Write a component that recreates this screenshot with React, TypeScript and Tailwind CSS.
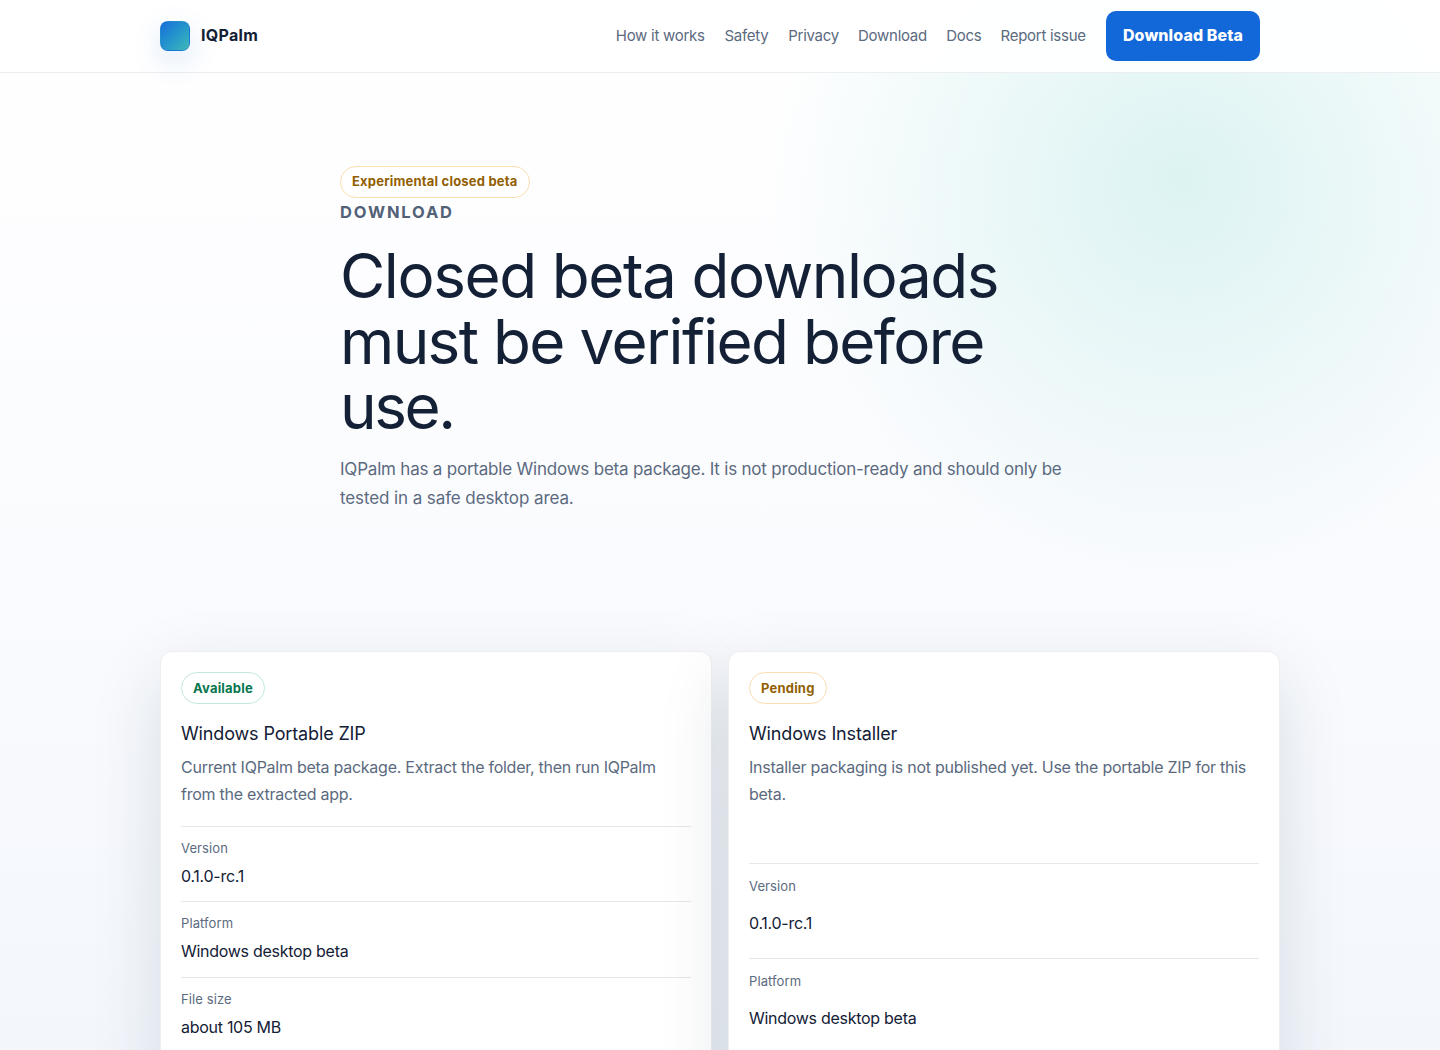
import React from 'react';
import clsx from 'clsx';

type Tone = 'success' | 'warning';

interface Detail {
  label: string;
  value: string;
}

interface DownloadCardProps {
  status: string;
  tone: Tone;
  title: string;
  description: string;
  details: Detail[];
  roomy?: boolean;
}

const navLinks = [
  { label: 'How it works', width: 'w-[89.3px]' },
  { label: 'Safety', width: 'w-[44.4px]' },
  { label: 'Privacy', width: 'w-[50.4px]' },
  { label: 'Download', width: 'w-[68.8px]' },
  { label: 'Docs', width: 'w-[34.9px]' },
  { label: 'Report issue', width: 'w-[85.5px]' },
];

const Badge: React.FC<{ tone: Tone; className?: string; children: React.ReactNode }> = ({ tone, className, children }) => (
  <span
    className={clsx(
      'inline-flex h-8 items-center whitespace-nowrap rounded-full border bg-white px-[11px] text-[13px] font-bold tracking-[0.2px]',
      tone === 'success' ? 'border-[#c5e8dc] text-[#08764f]' : 'border-[#fbdfb0] text-[#925f04]',
      className
    )}
  >
    {children}
  </span>
);

const Header: React.FC = () => (
  <header className="h-[73px] border-b border-[#162033]/8 bg-white/92">
    <div className="mx-auto flex h-[72px] w-[1120px] items-center justify-between pr-5">
      <a href="#" className="flex items-center gap-[11px]">
        <span className="size-[30px] rounded-lg border border-[#1268d8]/40 bg-linear-135 from-[#1c6ddb] to-[#3fb9b6] shadow-[0_10px_30px_rgba(18,104,216,0.16)]" />
        <span className="pb-0.5 text-base font-bold tracking-[0.3px] text-[#132036]">IQPalm</span>
      </a>
      <nav className="flex items-center">
        <div className="mr-5 flex gap-[19.4px]">
          {navLinks.map((link) => (
            <a key={link.label} href="#" className={clsx('whitespace-nowrap text-[15px] tracking-[-0.27px] text-[#5b6a7e]', link.width)}>
              {link.label}
            </a>
          ))}
        </div>
        <a
          href="#"
          className="flex h-[50px] w-[154px] items-center justify-center whitespace-nowrap rounded-[10px] bg-[#1268d8] pb-0.5 text-base font-extrabold tracking-[0.1px] text-white"
        >
          Download Beta
        </a>
      </nav>
    </div>
  </header>
);

const DownloadCard: React.FC<DownloadCardProps> = ({ status, tone, title, description, details, roomy }) => (
  <article className="h-[640px] rounded-xl border border-[#162033]/8 bg-white p-5 shadow-[0_24px_70px_rgba(18,38,58,0.13)]">
    <div className="flex">
      <Badge tone={tone} className="pt-0.5">{status}</Badge>
    </div>
    <h2 className="mt-[15px] text-lg leading-[30px] tracking-[-0.14px] text-[#132036]">{title}</h2>
    <p className="mt-[5px] text-base leading-[27px] tracking-[-0.26px] text-[#5b6a7e]">{description}</p>
    <dl className={roomy ? 'mt-[55px]' : 'mt-[18px]'}>
      {details.map((detail) => (
        <div
          key={detail.label}
          className={clsx('border-t border-[#162033]/10', roomy ? 'h-[94.7px] pt-[11px]' : 'h-[75.3px] pt-[10px]')}
        >
          <dt className="text-[13px] leading-[22px] tracking-[0.1px] text-[#5b6a7e]">{detail.label}</dt>
          <dd className={clsx('text-base leading-[27px] tracking-[-0.28px] text-[#132036]', roomy ? 'mt-[13px]' : 'mt-1')}>
            {detail.value}
          </dd>
        </div>
      ))}
    </dl>
  </article>
);

const details: Detail[] = [
  { label: 'Version', value: '0.1.0-rc.1' },
  { label: 'Platform', value: 'Windows desktop beta' },
  { label: 'File size', value: 'about 105 MB' },
];

export default function App() {
  return (
    <div className="h-[1050px] overflow-hidden bg-[radial-gradient(circle_at_1181px_176px,rgba(26,178,170,0.145),transparent_412px),linear-gradient(180deg,#ffffff_0%,#fafbfe_55%,#f3f7fc_100%)] font-['Inter','Liberation_Sans',sans-serif] text-[#132036]">
      <Header />
      <main>
        <section className="mx-auto h-[578px] w-[760px] pt-[93px]">
          <div className="flex">
            <Badge tone="warning">Experimental closed beta</Badge>
          </div>
          <p className="text-[16.5px] font-bold uppercase leading-[28px] tracking-[1.85px] text-[#526176]">Download</p>
          <h1 className="mt-[17px] text-[62px] leading-[65.7px]">
            <span className="block tracking-[-1.44px]">Closed beta downloads</span>
            <span className="block tracking-[-1.68px]">must be verified before</span>
            <span className="block tracking-[-2.4px]">use.</span>
          </h1>
          <p className="mt-[15px] text-[17px] leading-[29px] tracking-[-0.21px] text-[#5b6a7e]">
            IQPalm has a portable Windows beta package. It is not production-ready and should only be
            <br />
            <span className="tracking-[-0.1px]">tested in a safe desktop area.</span>
          </p>
        </section>
        <section className="mx-auto grid w-[1120px] grid-cols-2 gap-4">
          <DownloadCard
            status="Available"
            tone="success"
            title="Windows Portable ZIP"
            description="Current IQPalm beta package. Extract the folder, then run IQPalm from the extracted app."
            details={details}
          />
          <DownloadCard
            status="Pending"
            tone="warning"
            title="Windows Installer"
            description="Installer packaging is not published yet. Use the portable ZIP for this beta."
            details={details.slice(0, 2)}
            roomy
          />
        </section>
      </main>
    </div>
  );
}
